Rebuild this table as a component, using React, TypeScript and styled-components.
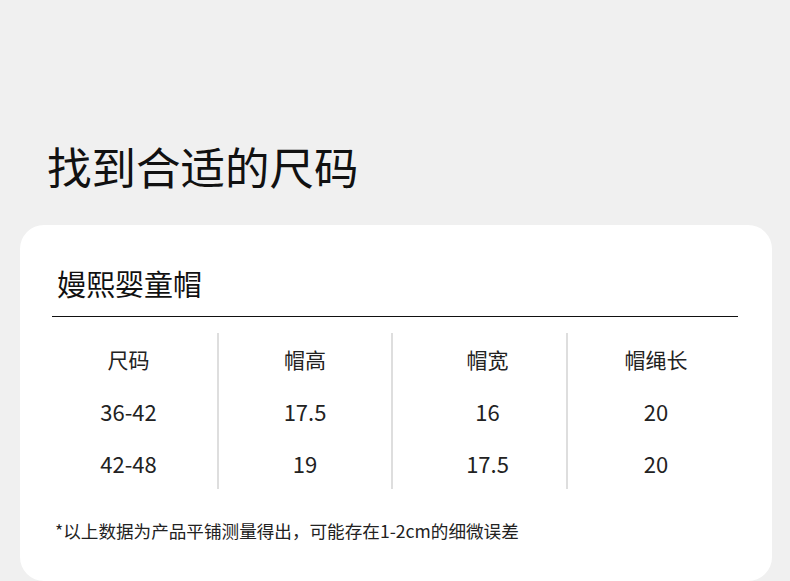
import styled, { createGlobalStyle } from 'styled-components';

const headers = ['尺码', '帽高', '帽宽', '帽绳长'];
const rows = [
    ['36-42', '17.5', '16', '20'],
    ['42-48', '19', '17.5', '20'],
];
// small nudges so each column's text sits where the original puts it
const shifts = [-6, 0, 8, 3];

const GlobalStyle = createGlobalStyle`
    html, body {
        margin: 0;
        padding: 0;
        background: #f0f0f0;
    }
    body {
        font-family: "Noto Sans CJK SC", "Noto Sans", sans-serif;
        color: #1a1a1a;
    }
`;

export default function App() {
    return (
        <>
            <GlobalStyle />
            <Page>
                <Title>找到合适的尺码</Title>
                <Card>
                    <Subtitle>嫚熙婴童帽</Subtitle>
                    <Rule />
                    <Table>
                        {headers.map((h, col) => (
                            <Column key={h} $first={col === 0} $shift={shifts[col]}>
                                <Cell $head>{h}</Cell>
                                {rows.map((r, i) => (
                                    <Cell key={i}>{r[col]}</Cell>
                                ))}
                            </Column>
                        ))}
                    </Table>
                    <Note>*以上数据为产品平铺测量得出，可能存在1-2cm的细微误差</Note>
                </Card>
            </Page>
        </>
    );
}

const Page = styled.div`
    width: 790px;
    height: 581px;
    overflow: hidden;
    padding-top: 136px;
    box-sizing: border-box;
`;

const Title = styled.h1`
    margin: 0 0 29px 47px;
    font-size: 44.5px;
    line-height: 60px;
    font-weight: 400;
    color: #111;
`;

const Card = styled.div`
    margin: 0 18px 0 20px;
    background: #fff;
    border-radius: 24px;
    padding: 38px 34px 0 32px;
    height: 356px;
    box-sizing: border-box;
`;

const Subtitle = styled.h2`
    margin: 0 0 13px 5px;
    font-size: 29px;
    line-height: 40px;
    font-weight: 400;
    color: #111;
`;

const Rule = styled.div`
    height: 1px;
    background: #111;
`;

const Table = styled.div`
    display: grid;
    grid-template-columns: 165px 174px 175px 172px;
    margin-top: 16px;
`;

const Column = styled.div<{ $first: boolean; $shift: number }>`
    display: flex;
    flex-direction: column;
    border-left: ${({ $first }) => ($first ? 'none' : '2px solid #dedede')};
    padding-left: ${({ $shift }) => ($shift > 0 ? $shift * 2 : 0)}px;
    padding-right: ${({ $shift }) => ($shift < 0 ? -$shift * 2 : 0)}px;
`;

const Cell = styled.div<{ $head?: boolean }>`
    height: 52px;
    display: flex;
    align-items: center;
    justify-content: center;
    font-size: ${({ $head }) => ($head ? '21px' : '22px')};
    color: #222;
`;

const Note = styled.p`
    margin: 30px 0 0 3px;
    font-size: 17.6px;
    line-height: 24px;
    color: #222;
`;
